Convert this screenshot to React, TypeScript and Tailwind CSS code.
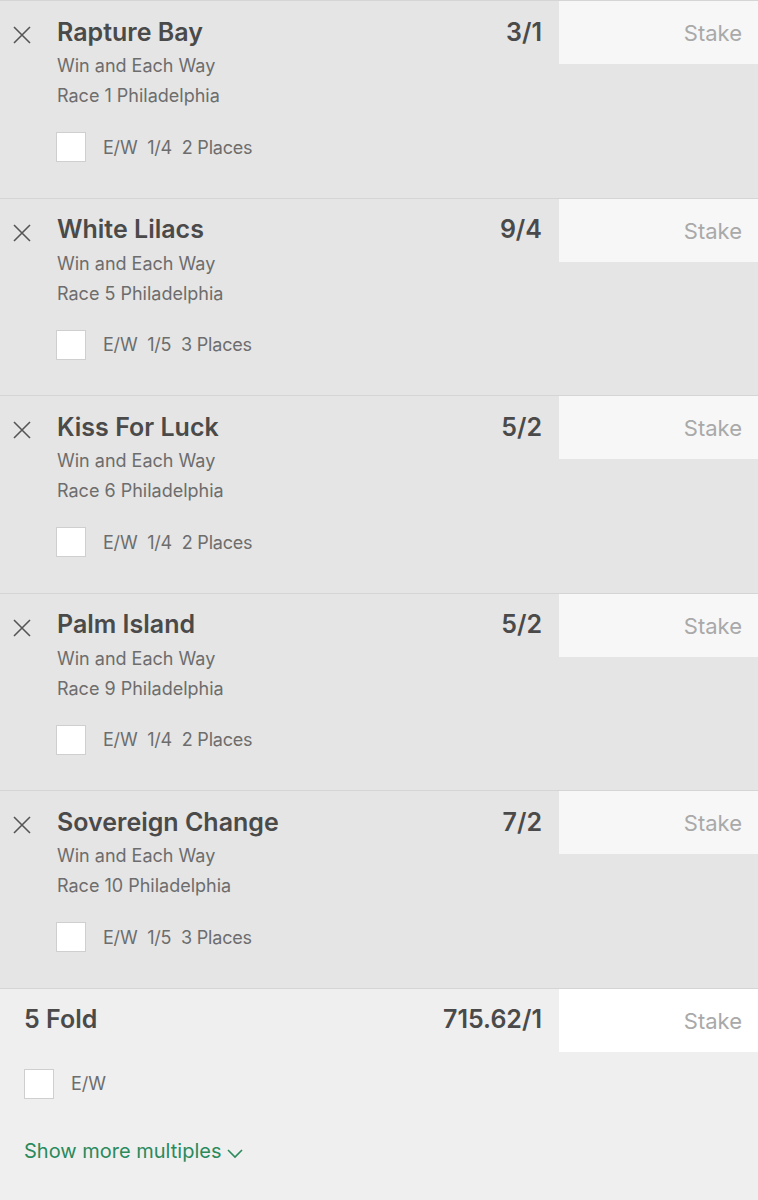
import React from "react";

interface Selection {
  name: string;
  odds: string;
  race: string;
  terms: string;
}

const selections: Selection[] = [
  { name: "Rapture Bay", odds: "3/1", race: "Race 1 Philadelphia", terms: "E/W  1/4  2 Places" },
  { name: "White Lilacs", odds: "9/4", race: "Race 5 Philadelphia", terms: "E/W  1/5  3 Places" },
  { name: "Kiss For Luck", odds: "5/2", race: "Race 6 Philadelphia", terms: "E/W  1/4  2 Places" },
  { name: "Palm Island", odds: "5/2", race: "Race 9 Philadelphia", terms: "E/W  1/4  2 Places" },
  { name: "Sovereign Change", odds: "7/2", race: "Race 10 Philadelphia", terms: "E/W  1/5  3 Places" },
];

function CloseIcon() {
  return (
    <svg width="18" height="18" viewBox="0 0 18 18" className="text-[#555]">
      <path d="M1 1 L17 17 M17 1 L1 17" stroke="currentColor" strokeWidth="1.6" fill="none" />
    </svg>
  );
}

function Checkbox() {
  return <div className="w-[30px] h-[30px] bg-white border border-[#cfcfcf] shrink-0" />;
}

function StakeBox({ white }: { white?: boolean }) {
  return (
    <div
      className={
        "w-[199px] h-[63px] shrink-0 flex items-center justify-end pr-[16px] " +
        (white ? "bg-white" : "bg-[#f7f7f7]")
      }
    >
      <span className="text-[22px] text-[#a9a9a9] mt-[2px]">Stake</span>
    </div>
  );
}

function SelectionRow({ s }: { s: Selection }) {
  return (
    <div className="h-[197.5px] flex border-b border-[#d5d5d5] bg-[#e5e5e5]">
      {/* close */}
      <div className="w-[57px] shrink-0 pl-[13px] pt-[25px]">
        <CloseIcon />
      </div>

      {/* details */}
      <div className="flex-1 pr-[17px]">
        <div className="flex justify-between items-center h-[63px]">
          <span className="text-[25px] font-semibold text-[#4a4a4a]">{s.name}</span>
          <span className="text-[25px] font-semibold text-[#4a4a4a]">{s.odds}</span>
        </div>
        <div className="text-[18px] text-[#6d6d6d] leading-[30px] -mt-[13px]">Win and Each Way</div>
        <div className="text-[18px] text-[#6d6d6d] leading-[30px]">{s.race}</div>
        <div className="flex items-center gap-[17px] mt-[21px] -ml-[1px]">
          <Checkbox />
          <span className="text-[18px] text-[#6d6d6d] whitespace-pre tracking-[-0.2px]">{s.terms}</span>
        </div>
      </div>

      <StakeBox />
    </div>
  );
}

export default function App() {
  return (
    <div className="w-[758px] h-[1200px] bg-[#efefef] overflow-hidden" style={{ fontFamily: "Inter, 'Liberation Sans', sans-serif" }}>
      <div className="border-t border-[#d5d5d5]">
        {selections.map((s) => (
          <SelectionRow key={s.name} s={s} />
        ))}
      </div>

      {/* multiples */}
      <div className="flex">
        <div className="flex-1 pl-[24px] pr-[17px] flex justify-between items-center h-[63px]">
          <span className="text-[25px] font-semibold text-[#4a4a4a]">5 Fold</span>
          <span className="text-[25px] font-semibold text-[#4a4a4a]">715.62/1</span>
        </div>
        <StakeBox white />
      </div>
      <div className="flex items-center gap-[17px] pl-[24px] mt-[17px]">
        <Checkbox />
        <span className="text-[18px] text-[#6d6d6d]">E/W</span>
      </div>
      <div className="flex items-center gap-[6px] pl-[24px] mt-[37px]">
        <span className="text-[20px] text-[#2a8a5c]">Show more multiples</span>
        <svg width="16" height="10" viewBox="0 0 16 10" className="mt-[6px] text-[#2a8a5c]">
          <path d="M1 1 L8 8 L15 1" stroke="currentColor" strokeWidth="1.6" fill="none" />
        </svg>
      </div>
    </div>
  );
}
